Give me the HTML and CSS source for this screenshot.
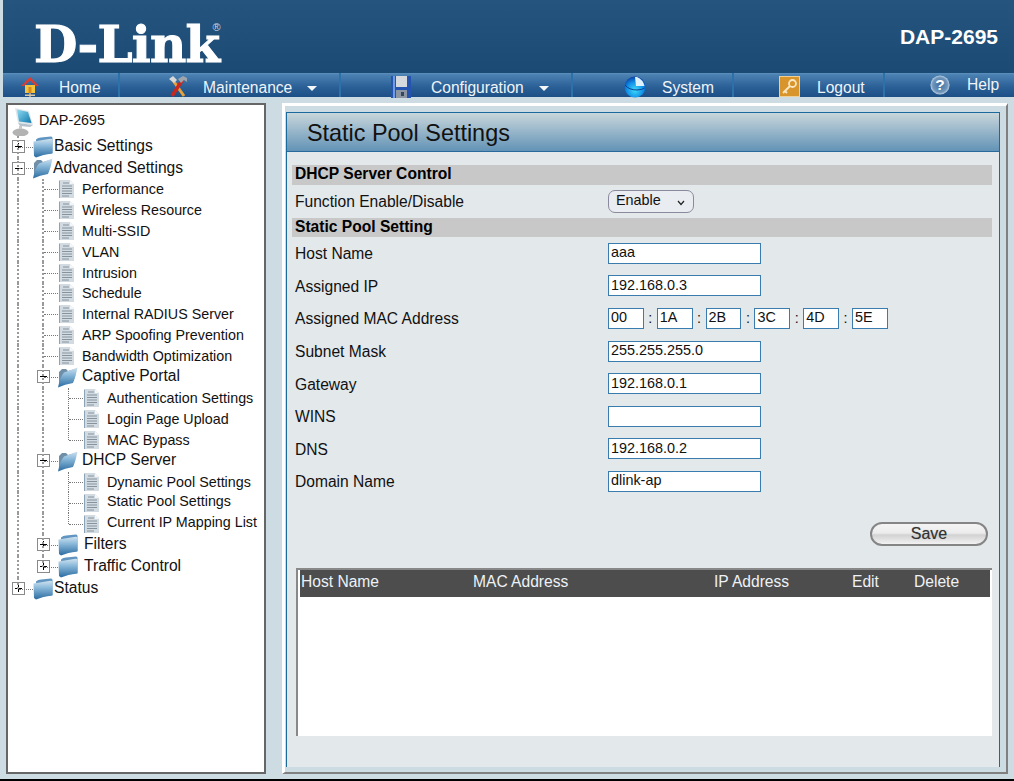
FILE: index.html
```html
<!DOCTYPE html>
<html lang="en">
<head>
    <meta charset="UTF-8">
    <meta name="viewport" content="width=device-width, initial-scale=1.0">
    <title>D-Link DAP-2695</title>
    <link rel="stylesheet" href="styles.css">
</head>
<body>
    <svg class="defs" width="0" height="0">
        <defs>
            <linearGradient id="gFolder" x1="0" y1="0" x2="0" y2="1">
                <stop offset="0" stop-color="#cfe1ee"/>
                <stop offset="0.35" stop-color="#8dbbdb"/>
                <stop offset="1" stop-color="#2a6ba1"/>
            </linearGradient>
            <linearGradient id="gScreen" x1="0" y1="0" x2="1" y2="1">
                <stop offset="0" stop-color="#8fdcf2"/>
                <stop offset="1" stop-color="#0f78ad"/>
            </linearGradient>
            <radialGradient id="gBall" cx="0.5" cy="0.65" r="0.65">
                <stop offset="0" stop-color="#3fdcf7"/>
                <stop offset="0.6" stop-color="#108fe8"/>
                <stop offset="1" stop-color="#0b3fa6"/>
            </radialGradient>
            <radialGradient id="gHelp" cx="0.5" cy="0.5" r="0.55">
                <stop offset="0" stop-color="#3f6f9f"/>
                <stop offset="0.7" stop-color="#7096bb"/>
                <stop offset="1" stop-color="#dfe9f1"/>
            </radialGradient>
            <symbol id="i-folder" viewBox="0 0 20 22">
                <path d="M3 3.500 Q5 1.500 8 1.500 L18 0.500 Q19.500 0.500 19.500 2 L19.500 17 L3 20 Z" fill="#5f95c0"/>
                <path d="M0.500 5.500 L16 3 Q19 2.500 19.500 3.500 L19.500 17.500 Q11 18 3 21.500 L1 20 Z" fill="url(#gFolder)"/>
            </symbol>
            <symbol id="i-folder-open" viewBox="0 0 21 22">
                <path d="M2 6 L5 3 L9 3 L11 5 L18 3 L17 15 L2 20 Z" fill="#6f8fa9"/>
                <path d="M1 21.500 Q3 11 7 6.500 Q14 4 20.500 1.500 Q19 10 16 17 Q8 18 1 21.500 Z" fill="url(#gFolder)"/>
            </symbol>
            <symbol id="i-page" viewBox="0 0 16 20">
                <path d="M1 1 L11 1 L15 5 L15 19 L1 19 Z" fill="#d3dbe2"/>
                <path d="M11 1 L15 5 L11 5 Z" fill="#f4f6f8"/>
                <path d="M1 1 L1 19 L0 19 L0 2 Z" fill="#8aa3b8"/>
                <path d="M4 4 H10 M3 7 H13 M3 9.500 H13 M3 12 H13 M3 14.500 H13 M3 17 H10" stroke="#7c8a95" stroke-width="0.900" fill="none"/>
            </symbol>
            <symbol id="i-computer" viewBox="0 0 22 29">
                <path d="M3 1 L17 4 L21 18 L6 16 Z" fill="#dfe7ec"/>
                <path d="M5 2.500 L16 5 L19.500 16 L7 14.500 Z" fill="url(#gScreen)"/>
                <path d="M6 16 L21 18 L18 20 L8 19 Z" fill="#b5c2cb"/>
                <ellipse cx="8.500" cy="25.500" rx="8" ry="4" fill="#b3b3b3"/>
                <rect x="7" y="19" width="3" height="3" fill="#c9c9c9"/>
            </symbol>
            <symbol id="i-home" viewBox="0 0 18 22">
                <rect x="8" y="16" width="2" height="5" fill="#9a9a9a"/>
                <rect x="4" y="18.500" width="10" height="1.500" fill="#d8c8a8"/>
                <path d="M4 9 H14 V17 H4 Z" fill="#f4c53c"/>
                <rect x="7.500" y="11" width="3" height="6" fill="#d98b1f"/>
                <path d="M9 1 L18 10 L15 10 L9 4.500 L3 10 L0 10 Z" fill="#df3b2e"/>
            </symbol>
            <symbol id="i-tools" viewBox="0 0 20 22">
                <path d="M4 3 L16 20" stroke="#e8a23c" stroke-width="3"/>
                <path d="M1 3 L5 0 L9 4 L6 7 Z" fill="#d8d8d8"/>
                <path d="M15 3 L4 20" stroke="#c9261e" stroke-width="3.500"/>
                <path d="M10 3 L15 0 L19 2 L19 6 L16 4 L13 7 Z" fill="#9fa6ab"/>
            </symbol>
            <symbol id="i-floppy" viewBox="0 0 20 22">
                <rect x="0" y="0" width="20" height="22" fill="#2554b0"/>
                <rect x="2" y="0" width="2" height="22" fill="#6f9be0"/>
                <rect x="5" y="0" width="11" height="11" fill="#d5d8dc"/>
                <rect x="5" y="14" width="11" height="8" fill="#8c97a3"/>
                <rect x="10" y="16" width="3" height="4" fill="#33475e"/>
            </symbol>
            <symbol id="i-system" viewBox="0 0 22 22">
                <circle cx="11" cy="11" r="10.500" fill="url(#gBall)"/>
                <path d="M11 1 L12 10 L20.500 10 Q19 3.500 13 1 Z" fill="#dff1fb"/>
                <path d="M1 9 Q5 14 13 14 Q18 14 20.500 12" stroke="#0a3f94" stroke-width="1" fill="none"/>
            </symbol>
            <symbol id="i-key" viewBox="0 0 21 21">
                <rect width="21" height="21" fill="#d8952c"/>
                <rect x="0.500" y="0.500" width="20" height="20" fill="none" stroke="#efcf94"/>
                <circle cx="13.500" cy="7.500" r="3.500" fill="none" stroke="#fbe7c4" stroke-width="1.800"/>
                <path d="M11 10 L4 17 M6 15 L8 17" stroke="#fbe7c4" stroke-width="1.800" fill="none"/>
            </symbol>
        </defs>
    </svg>

    <div class="page">
        <header class="top">
            <div class="logo">D-Link<span class="reg">®</span></div>
            <div class="model">DAP-2695</div>
        </header>

        <nav class="nav">
            <a class="nav-item home"><svg class="nav-icon"><use href="#i-home"/></svg>Home</a>
            <a class="nav-item maint"><svg class="nav-icon"><use href="#i-tools"/></svg>Maintenance<span class="arrow"></span></a>
            <a class="nav-item conf"><svg class="nav-icon"><use href="#i-floppy"/></svg>Configuration<span class="arrow"></span></a>
            <a class="nav-item sys"><svg class="nav-icon"><use href="#i-system"/></svg>System</a>
            <a class="nav-item logout"><svg class="nav-icon"><use href="#i-key"/></svg>Logout</a>
            <a class="nav-item help">
                <svg class="nav-icon" viewBox="0 0 22 22">
                    <circle cx="11" cy="11" r="10.500" fill="url(#gHelp)"/>
                    <text x="11" y="17" text-anchor="middle" class="help-mark">?</text>
                </svg>Help</a>
        </nav>

        <div class="main">
            <aside class="tree">
                <div class="row root"><svg class="ic-computer"><use href="#i-computer"/></svg><span class="tree-title">DAP-2695</span></div>

                <div class="row big"><span class="cell box plus"></span><svg class="ic-folder"><use href="#i-folder"/></svg><span class="lbl">Basic Settings</span></div>
                <div class="row big low"><span class="cell box minus"></span><svg class="ic-folder-open"><use href="#i-folder-open"/></svg><span class="lbl">Advanced Settings</span></div>

                <div class="row"><span class="cell line"></span><span class="cell tee"></span><svg class="ic-page"><use href="#i-page"/></svg><span class="lbl">Performance</span></div>
                <div class="row"><span class="cell line"></span><span class="cell tee"></span><svg class="ic-page"><use href="#i-page"/></svg><span class="lbl">Wireless Resource</span></div>
                <div class="row"><span class="cell line"></span><span class="cell tee"></span><svg class="ic-page"><use href="#i-page"/></svg><span class="lbl">Multi-SSID</span></div>
                <div class="row"><span class="cell line"></span><span class="cell tee"></span><svg class="ic-page"><use href="#i-page"/></svg><span class="lbl">VLAN</span></div>
                <div class="row"><span class="cell line"></span><span class="cell tee"></span><svg class="ic-page"><use href="#i-page"/></svg><span class="lbl">Intrusion</span></div>
                <div class="row"><span class="cell line"></span><span class="cell tee"></span><svg class="ic-page"><use href="#i-page"/></svg><span class="lbl">Schedule</span></div>
                <div class="row"><span class="cell line"></span><span class="cell tee"></span><svg class="ic-page"><use href="#i-page"/></svg><span class="lbl">Internal RADIUS Server</span></div>
                <div class="row"><span class="cell line"></span><span class="cell tee"></span><svg class="ic-page"><use href="#i-page"/></svg><span class="lbl">ARP Spoofing Prevention</span></div>
                <div class="row"><span class="cell line"></span><span class="cell tee"></span><svg class="ic-page"><use href="#i-page"/></svg><span class="lbl">Bandwidth Optimization</span></div>

                <div class="row big sub"><span class="cell line"></span><span class="cell box minus"></span><svg class="ic-folder-open"><use href="#i-folder-open"/></svg><span class="lbl">Captive Portal</span></div>
                <div class="row"><span class="cell line"></span><span class="cell line"></span><span class="cell tee thin"></span><svg class="ic-page"><use href="#i-page"/></svg><span class="lbl">Authentication Settings</span></div>
                <div class="row"><span class="cell line"></span><span class="cell line"></span><span class="cell tee thin"></span><svg class="ic-page"><use href="#i-page"/></svg><span class="lbl">Login Page Upload</span></div>
                <div class="row"><span class="cell line"></span><span class="cell line"></span><span class="cell corner thin"></span><svg class="ic-page"><use href="#i-page"/></svg><span class="lbl">MAC Bypass</span></div>

                <div class="row big sub"><span class="cell line"></span><span class="cell box minus"></span><svg class="ic-folder-open"><use href="#i-folder-open"/></svg><span class="lbl">DHCP Server</span></div>
                <div class="row"><span class="cell line"></span><span class="cell line"></span><span class="cell tee thin"></span><svg class="ic-page"><use href="#i-page"/></svg><span class="lbl">Dynamic Pool Settings</span></div>
                <div class="row lift"><span class="cell line"></span><span class="cell line"></span><span class="cell tee thin"></span><svg class="ic-page"><use href="#i-page"/></svg><span class="lbl">Static Pool Settings</span></div>
                <div class="row lift"><span class="cell line"></span><span class="cell line"></span><span class="cell corner thin"></span><svg class="ic-page"><use href="#i-page"/></svg><span class="lbl">Current IP Mapping List</span></div>

                <div class="row big sub tall"><span class="cell line"></span><span class="cell box plus"></span><svg class="ic-folder"><use href="#i-folder"/></svg><span class="lbl">Filters</span></div>
                <div class="row big sub"><span class="cell line"></span><span class="cell box plus last"></span><svg class="ic-folder"><use href="#i-folder"/></svg><span class="lbl">Traffic Control</span></div>
                <div class="row big"><span class="cell box plus last"></span><svg class="ic-folder"><use href="#i-folder"/></svg><span class="lbl">Status</span></div>
            </aside>

            <section class="content">
                <div class="panel">
                    <h1 class="panel-title">Static Pool Settings</h1>
                    <div class="panel-body">
                        <h2 class="bar">DHCP Server Control</h2>
                        <div class="field field-select">
                            <label>Function Enable/Disable</label>
                            <select class="sel"><option>Enable</option><option>Disable</option></select>
                        </div>
                        <h2 class="bar bar-second">Static Pool Setting</h2>
                        <div class="field"><label>Host Name</label><input class="txt" type="text" value="aaa"></div>
                        <div class="field"><label>Assigned IP</label><input class="txt" type="text" value="192.168.0.3"></div>
                        <div class="field">
                            <label>Assigned MAC Address</label>
                            <div class="mac">
                                <input class="txt octet" type="text" value="00"><span>:</span>
                                <input class="txt octet" type="text" value="1A"><span>:</span>
                                <input class="txt octet" type="text" value="2B"><span>:</span>
                                <input class="txt octet" type="text" value="3C"><span>:</span>
                                <input class="txt octet" type="text" value="4D"><span>:</span>
                                <input class="txt octet" type="text" value="5E">
                            </div>
                        </div>
                        <div class="field"><label>Subnet Mask</label><input class="txt" type="text" value="255.255.255.0"></div>
                        <div class="field"><label>Gateway</label><input class="txt" type="text" value="192.168.0.1"></div>
                        <div class="field"><label>WINS</label><input class="txt" type="text" value=""></div>
                        <div class="field"><label>DNS</label><input class="txt" type="text" value="192.168.0.2"></div>
                        <div class="field"><label>Domain Name</label><input class="txt" type="text" value="dlink-ap"></div>

                        <div class="actions"><button class="save" type="button">Save</button></div>

                        <div class="list">
                            <table class="pool">
                                <thead>
                                    <tr><th class="c-host">Host Name</th><th class="c-mac">MAC Address</th><th class="c-ip">IP Address</th><th class="c-edit">Edit</th><th>Delete</th></tr>
                                </thead>
                            </table>
                        </div>
                    </div>
                </div>
            </section>
        </div>
    </div>
</body>
</html>
```

FILE: styles.css
```css
* {
    box-sizing: border-box;
}
html, body {
    margin: 0;
    height: 781px;
    overflow: hidden;
}
body {
    background: #cddbe2;
    font-family: "Liberation Sans", Arial, sans-serif;
    color: #000;
}
.defs {
    position: absolute;
}
.page {
    height: 781px;
    padding-left: 3px;
    border-bottom: 2px solid #000;
    display: flex;
    flex-direction: column;
}

/* header */
.top {
    height: 73px;
    flex: none;
    background: linear-gradient(#25547f, #1b4a75);
    display: flex;
    justify-content: space-between;
    align-items: flex-start;
    padding: 0 16px 0 31px;
}
.logo {
    font-family: "DejaVu Serif", serif;
    font-weight: bold;
    font-size: 50px;
    line-height: 50px;
    margin-top: 20px;
    color: #fff;
    letter-spacing: -0.8px;
    -webkit-text-stroke: 1px #fff;
}
.reg {
    font-family: "Liberation Sans", sans-serif;
    font-weight: normal;
    font-size: 11px;
    letter-spacing: 0;
    vertical-align: 31px;
    line-height: 0;
    margin-left: -7px;
    color: #c9d6e0;
    -webkit-text-stroke: 0;
}
.model {
    font-size: 21px;
    font-weight: bold;
    color: #fff;
    margin-top: 25px;
}

/* menu */
.nav {
    height: 24px;
    flex: none;
    display: flex;
    background: linear-gradient(#5d90bd 0, #4a80b1 2px, #2a6096 14px, #1c4f85 100%);
    color: #f0f4f8;
    font-size: 15.6px;
}
.nav-item {
    display: flex;
    align-items: center;
    height: 24px;
    padding-top: 6px;
    border-right: 2px solid #2d71aa;
    position: relative;
    flex: none;
}
.nav-icon {
    height: 22px;
    flex: none;
    margin-top: -3px;
}
.home { width: 117px; padding-left: 18px; }
.home .nav-icon { width: 18px; margin-right: 20px; }
.maint { width: 221px; padding-left: 48px; }
.maint .nav-icon { width: 20px; margin-right: 15px; }
.conf { width: 232px; padding-left: 50px; }
.conf .nav-icon { width: 20px; margin-right: 20px; }
.sys { width: 161px; padding-left: 51px; }
.sys .nav-icon { width: 22px; margin-right: 16px; }
.logout { width: 151px; padding-left: 45px; }
.logout .nav-icon { width: 21px; margin-right: 17px; height: 21px; margin-top: -3px; }
.help { width: 129px; padding-left: 45px; border-right: 0; padding-top: 0; }
.help .nav-icon { width: 20px; height: 20px; margin: 0 17px 0 0; }
.help-mark {
    font-size: 17px;
    font-weight: bold;
    fill: #fff;
}
.arrow {
    width: 0;
    height: 0;
    margin-left: 15px;
    border-left: 5px solid transparent;
    border-right: 5px solid transparent;
    border-top: 5px solid #f5f8fa;
}

/* layout under the menu */
.main {
    flex: 1;
    display: flex;
    min-height: 0;
    padding: 6px 6px 5px 3px;
    gap: 16px;
}

/* left tree */
.tree {
    width: 260px;
    flex: none;
    background: #fff;
    border: 2px solid #666;
    font-size: 14.3px;
    color: #111;
}
.row {
    display: flex;
    align-items: center;
    height: 20.8px;
}
.row.big {
    height: 21.5px;
    font-size: 15.6px;
}
.row.big .lbl {
    margin-bottom: 2px;
}
.row.big.low .lbl {
    margin-bottom: 0;
}
.row.big.tall {
    height: 22.5px;
}
.row.lift .lbl {
    margin-bottom: 4px;
}
.root {
    height: 31px;
    align-items: flex-start;
    padding: 2px 0 0 4px;
}
.tree-title {
    margin: 5px 0 0 5px;
}
.ic-computer { width: 22px; height: 29px; flex: none; }
.ic-folder { width: 20px; height: 22px; flex: none; margin-right: 1px; }
.ic-folder-open { width: 21px; height: 22px; flex: none; margin-left: -1px; }
.ic-page { width: 16px; height: 20px; flex: none; margin-left: 1px; margin-right: 7px; }
.sub .ic-folder { margin-right: 6px; }
.sub .ic-folder-open { margin-right: 4px; }

.cell {
    width: 25px;
    height: 100%;
    flex: none;
    position: relative;
}
.line::before, .tee::before, .corner::before, .box::before {
    content: "";
    position: absolute;
    left: 9px;
    top: 0;
    bottom: 0;
    border-left: 2px dotted #9a9a9a;
}
.thin::before {
    left: 10px;
    border-left: 1px dotted #777;
}
.corner::before, .box.last::before {
    bottom: 50%;
}
.tee::after, .corner::after, .box::after {
    content: "";
    position: absolute;
    left: 11px;
    right: 0;
    top: 50%;
    border-top: 1px dotted #777;
}
.box {
    background-repeat: no-repeat;
    z-index: 0;
}
/* the expander square is painted over the dotted lines */
.plus {
    background-image:
        linear-gradient(#000, #000),
        linear-gradient(#000, #000),
        linear-gradient(#fff, #fff),
        linear-gradient(#8a8a8a, #8a8a8a);
    background-size: 7px 1px, 1px 7px, 11px 11px, 13px 13px;
    background-position: 7px 10px, 10px 7px, 5px 5px, 4px 4px;
}
.minus {
    background-image:
        linear-gradient(#000, #000),
        linear-gradient(#fff, #fff),
        linear-gradient(#8a8a8a, #8a8a8a);
    background-size: 7px 1px, 11px 11px, 13px 13px;
    background-position: 7px 10px, 5px 5px, 4px 4px;
}
.box::before, .box::after {
    z-index: -1;
}

/* right side */
.content {
    flex: 1;
    min-width: 0;
    border-left: 3px solid #fff;
    border-top: 3px solid #fff;
    border-right: 2px solid #808080;
    border-bottom: 2px solid #808080;
    padding: 6px 6px 5px 1px;
    display: flex;
}
.panel {
    flex: 1;
    min-width: 0;
    background: #e3e8eb;
    border: 1px solid #1a6a9e;
    border-bottom: 0;
}
.panel-title {
    margin: 0;
    height: 39px;
    font-size: 23.4px;
    font-weight: normal;
    line-height: 40px;
    padding-left: 20px;
    color: #111;
    background: linear-gradient(#c9d6db, #6293b6);
    border-bottom: 1px solid #2a6a9a;
}
.panel-body {
    padding: 13px 7px 0 5px;
}
.bar {
    margin: 0;
    height: 20px;
    font-size: 15.6px;
    line-height: 18px;
    font-weight: bold;
    padding-left: 3px;
    background: #c8c8c8;
}
.bar-second {
    height: 19px;
}
.field {
    display: grid;
    grid-template-columns: 316px 1fr;
    align-items: center;
    height: 32.6px;
    font-size: 15.6px;
    color: #111;
}
.field label {
    padding: 2px 0 0 3px;
}
.field-select {
    height: 33px;
}
.field-select label {
    padding-top: 0;
}
.sel {
    appearance: none;
    width: 86px;
    height: 23px;
    font-family: inherit;
    font-size: 14.4px;
    padding: 0 0 3px 7px;
    background: #e9ecf0 url("data:image/svg+xml,%3Csvg xmlns='http://www.w3.org/2000/svg' width='8' height='6'%3E%3Cpath d='M1 1 L4 4.500 L7 1' fill='none' stroke='%23222' stroke-width='1.200'/%3E%3C/svg%3E") no-repeat 68px 9px;
    border: 1px solid #8a8a9c;
    border-radius: 7px;
    color: #111;
}
.txt {
    width: 153px;
    height: 21px;
    border: 1px solid #3a7cae;
    border-radius: 0;
    background: #fff;
    padding: 0 2px 2px;
    font-family: inherit;
    font-size: 14.4px;
    color: #111;
    outline: none;
    display: block;
}
.mac {
    display: flex;
    align-items: center;
}
.mac span {
    width: 13px;
    text-align: center;
    font-size: 14.4px;
}
.txt.octet {
    width: 35.8px;
}
.actions {
    display: flex;
    justify-content: flex-end;
    padding: 24px 4px 0 0;
}
.save {
    width: 118px;
    height: 24px;
    padding: 0;
    border: 2px solid #858585;
    border-radius: 12px;
    background: linear-gradient(#f4f4f4 0, #ececec 45%, #d2d2d2 55%, #f2f2f2 100%);
    font-family: inherit;
    font-size: 16px;
    color: #333;
    text-shadow: 0 0 1px #999;
}
.list {
    margin: 22px 0 0 4px;
    height: 168px;
    background: #fff;
    border-top: 2px solid #888;
    border-left: 2px solid #888;
    padding-left: 2px;
}
.pool {
    width: 690px;
    border-collapse: collapse;
    table-layout: fixed;
}
.pool th {
    height: 27px;
    padding: 0 0 3px 1px;
    background: #4d4d4d;
    color: #eef2f6;
    font-size: 15.6px;
    font-weight: normal;
    text-align: left;
}
.c-host { width: 172px; }
.c-mac { width: 241px; }
.c-ip { width: 138px; }
.c-edit { width: 62px; }
```
